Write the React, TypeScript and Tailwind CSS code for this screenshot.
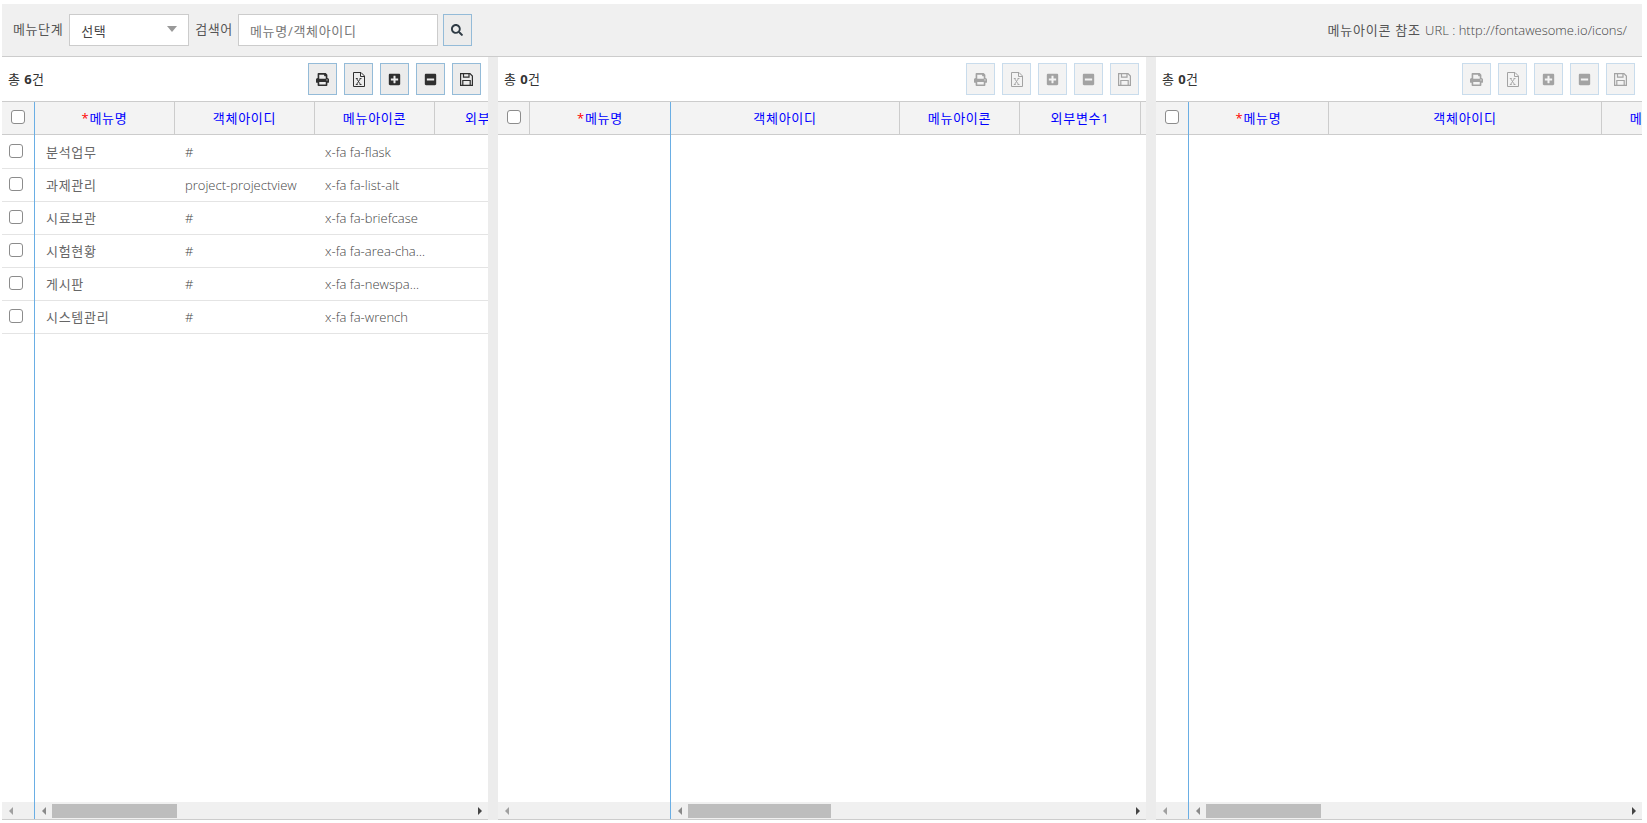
import { FaMinusSquare, FaPlusSquare, FaPrint, FaSearch } from "react-icons/fa";

type Column = { label: string; width: string; required?: boolean };

// the icon column shows these cut short, same as the grid does
const rows = [
  { name: "분석업무", id: "#", icon: "x-fa fa-flask" },
  { name: "과제관리", id: "project-projectview", icon: "x-fa fa-list-alt" },
  { name: "시료보관", id: "#", icon: "x-fa fa-briefcase" },
  { name: "시험현황", id: "#", icon: "x-fa fa-area-cha…" },
  { name: "게시판", id: "#", icon: "x-fa fa-newspa…" },
  { name: "시스템관리", id: "#", icon: "x-fa fa-wrench" },
];

function FileExcelIcon() {
  return (
    <svg width="12" height="15" viewBox="0 0 12 15" fill="none" stroke="currentColor">
      <path d="M.5.5h7.5l3.5 3.5v10.500H.5z" />
      <path d="M7.500.5v4h4" />
      <path d="M3.500 6.500l4 6M7.500 6.500l-4 6M2.800 6.500h2M6.500 6.500h2M2.800 12.500h2M6.500 12.500h2" strokeWidth="0.9" />
    </svg>
  );
}

function SaveIcon() {
  return (
    <svg width="13" height="13" viewBox="0 0 13 13" fill="none" stroke="currentColor" strokeWidth="1.200">
      <path d="M.6.6h9.400l2.400 2.400v9.400H.6z" />
      <path d="M3.500.6v3.600h5.500V.6M2.800 12.400V7.500h7.400v4.900" />
    </svg>
  );
}

const toolIcons = [
  <FaPrint size={13} />,
  <FileExcelIcon />,
  <FaPlusSquare size={13} />,
  <FaMinusSquare size={13} />,
  <SaveIcon />,
];

function Checkbox() {
  return <span className="block h-[14px] w-[14px] rounded-[3px] border border-[#8c8c8c] bg-white" />;
}

function HeaderCell({ label, width, required }: Column) {
  return (
    <div className={`${width} flex h-full shrink-0 items-center justify-center whitespace-nowrap border-r border-[#cccccc] pt-[1px] text-[13px] tracking-[0.7px] text-[#0000ff]`}>
      {required && <span className="text-[#ff0000]">*</span>}
      {label}
    </div>
  );
}

function ScrollArrow({ right, faded }: { right?: boolean; faded?: boolean }) {
  if (right) {
    return <span className="h-0 w-0 border-y-[4px] border-l-[4px] border-y-transparent border-l-[#444444]" />;
  }
  return (
    <span className={`h-0 w-0 border-y-[4px] border-r-[4px] border-y-transparent ${faded ? "border-r-[#a0a0a0]" : "border-r-[#8a8a8a]"}`} />
  );
}

function GridToolbar({ total, disabled }: { total: number; disabled?: boolean }) {
  return (
    <div className="flex h-[45px] shrink-0 items-center justify-between border-b border-[#cccccc] pl-[6px] pr-[7px]">
      <span className="pt-[1px] text-[13px] tracking-[0.4px] text-[#333333]">
        총 <span className="font-bold">{total}</span>건
      </span>
      <div className="flex gap-[7px]">
        {toolIcons.map((icon, i) => (
          <button
            key={i}
            className={
              disabled
                ? "flex h-[32px] w-[29px] items-center justify-center border border-[#c9dcec] bg-[#f3f3f3] text-[#a3a3a3]"
                : "flex h-[32px] w-[29px] items-center justify-center border border-[#94bbd8] bg-[#ececec] text-[#2f2f2f]"
            }
          >
            {icon}
          </button>
        ))}
      </div>
    </div>
  );
}

function Panel({
  className,
  total,
  disabled,
  frozenClass,
  frozenColumn,
  columns,
  data,
  checkHeaderClass,
  thumbClass,
}: {
  className: string;
  total: number;
  disabled?: boolean;
  frozenClass: string;
  frozenColumn?: Column;
  columns: Column[];
  data: typeof rows;
  checkHeaderClass: string;
  thumbClass: string;
}) {
  return (
    <section className={`${className} flex shrink-0 flex-col border-b border-[#cccccc] bg-white`}>
      <GridToolbar total={total} disabled={disabled} />
      <div className="flex min-h-0 flex-1">
        {/* frozen column */}
        <div className={`${frozenClass} flex shrink-0 flex-col border-r border-[#6aaee4]`}>
          <div className="flex h-[33px] shrink-0 items-center border-b border-[#cccccc] bg-[#f3f3f3]">
            <div className={`${checkHeaderClass} flex h-full shrink-0 items-center pb-[2px] pl-[9px]`}>
              <Checkbox />
            </div>
            {frozenColumn && <HeaderCell {...frozenColumn} width="flex-1 !border-r-0" />}
          </div>
          <div className="flex-1 pt-[1px]">
            {data.map((row) => (
              <div key={row.name} className="flex h-[33px] items-center border-b border-[#e4e4e4] pb-[2px] pl-[7px]">
                <Checkbox />
              </div>
            ))}
          </div>
          <div className="flex h-[17px] shrink-0 items-center bg-[#f0f0f0] pl-[7px]">
            <ScrollArrow faded />
          </div>
        </div>
        {/* scrolling columns */}
        <div className="flex min-w-0 flex-1 flex-col">
          <div className="flex min-h-0 flex-1 flex-col overflow-hidden">
            <div className="flex h-[33px] shrink-0 border-b border-[#cccccc] bg-[#f3f3f3]">
              {columns.map((col) => (
                <HeaderCell key={col.label} {...col} />
              ))}
            </div>
            <div className="pt-[1px]">
              {data.map((row) => (
                <div key={row.name} className="flex h-[33px] items-center border-b border-[#e4e4e4] pt-[1px] text-[13px] font-light text-[#444444]">
                  <div className="w-[140px] shrink-0 truncate pl-[11px] pr-[9px] font-normal tracking-[0.7px] text-[#666666]">{row.name}</div>
                  <div className="w-[140px] shrink-0 truncate px-[10px]">{row.id}</div>
                  <div className="w-[120px] shrink-0 whitespace-nowrap pl-[10px]">{row.icon}</div>
                  <div className="flex-1" />
                </div>
              ))}
            </div>
          </div>
          <div className="flex h-[17px] shrink-0 items-center bg-[#f0f0f0] pl-[7px] pr-[6px]">
            <ScrollArrow />
            <div className={`${thumbClass} h-[14px] bg-[#bdbdbd]`} />
            <span className="ml-auto flex">
              <ScrollArrow right />
            </span>
          </div>
        </div>
      </div>
    </section>
  );
}

export default function App() {
  return (
    <div className="flex h-[823px] w-[1647px] flex-col bg-white pb-[3px] pl-[2px] pr-[5px] pt-[4px] font-['Open_Sans','Noto_Sans_CJK_KR',sans-serif] text-[#555555]">
      <header className="flex h-[53px] shrink-0 items-start justify-between border-b border-[#cccccc] bg-[#f0f0f0] pl-[11px] pr-[15px] pt-[10px] text-[13px] tracking-[0.6px]">
        <div className="flex items-center">
          <span>메뉴단계</span>
          <div className="ml-[6px] flex h-[32px] w-[120px] items-center justify-between border border-[#cccccc] bg-white pl-[11px] pr-[11px]">
            <span className="pt-[3px] text-[#444444]">선택</span>
            <span className="-mt-[2px] h-0 w-0 border-x-[5px] border-t-[6px] border-x-transparent border-t-[#999999]" />
          </div>
          <span className="ml-[6px]">검색어</span>
          <input
            placeholder="메뉴명/객체아이디"
            className="ml-[5px] h-[32px] w-[200px] border border-[#cccccc] bg-white pl-[11px] pt-[2px] text-[13px] tracking-[0.7px] outline-none placeholder:text-[#777777]"
          />
          <button className="ml-[5px] flex h-[32px] w-[29px] items-center justify-center border border-[#94bbd8] bg-[#ececec] text-[#2f3b45]">
            <FaSearch size={12} />
          </button>
        </div>
        <span className="mt-[7px] tracking-[0.8px]">
          메뉴아이콘 참조 <span className="text-[13px] font-light tracking-normal text-[#444444]">URL : http://fontawesome.io/icons/</span>
        </span>
      </header>
      <main className="flex min-h-0 flex-1 bg-[#ececec]">
        <Panel
          className="w-[486px]"
          total={6}
          frozenClass="w-[33px]"
          checkHeaderClass="w-full"
          data={rows}
          columns={[
            { label: "메뉴명", width: "w-[140px]", required: true },
            { label: "객체아이디", width: "w-[140px]" },
            { label: "메뉴아이콘", width: "w-[120px]" },
            { label: "외부변수1", width: "w-[120px]" },
          ]}
          thumbClass="ml-[6px] w-[125px]"
        />
        <Panel
          className="ml-[10px] w-[648px]"
          total={0}
          disabled
          frozenClass="w-[173px]"
          checkHeaderClass="w-[32px] border-r border-[#cccccc]"
          frozenColumn={{ label: "메뉴명", width: "", required: true }}
          data={[]}
          columns={[
            { label: "객체아이디", width: "w-[229px]" },
            { label: "메뉴아이콘", width: "w-[120px]" },
            { label: "외부변수1", width: "w-[121px]" },
            { label: "외부변수2", width: "w-[121px]" },
          ]}
          thumbClass="ml-[6px] w-[143px]"
        />
        <Panel
          className="ml-[10px] w-[486px]"
          total={0}
          disabled
          frozenClass="w-[33px]"
          checkHeaderClass="w-full"
          data={[]}
          columns={[
            { label: "메뉴명", width: "w-[140px]", required: true },
            { label: "객체아이디", width: "w-[273px]" },
            { label: "메뉴아이콘", width: "w-[120px]" },
          ]}
          thumbClass="ml-[6px] w-[115px]"
        />
      </main>
    </div>
  );
}
